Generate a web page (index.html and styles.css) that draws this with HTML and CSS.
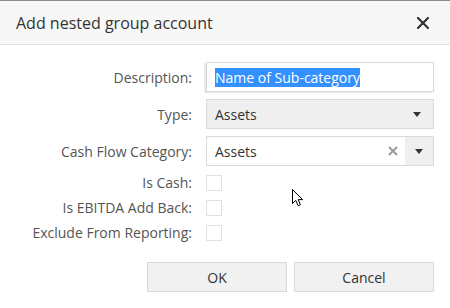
FILE: index.html
```html
<!DOCTYPE html>
<html>
<head>
<meta charset="utf-8">
<link rel="stylesheet" href="styles.css">
</head>
<body>
<div class="dialog">
  <div class="header">
    <span class="title">Add nested group account</span>
    <svg class="close" width="12" height="12" viewBox="0 0 12 12"><path d="M1 1L11 11M11 1L1 11" stroke="#333" stroke-width="2.2" stroke-linecap="square"/></svg>
  </div>
  <div class="form">
    <div class="row">
      <label class="label">Description:</label>
      <div class="input focused"><span class="sel">Name of Sub-category</span></div>
    </div>
    <div class="row">
      <label class="label">Type:</label>
      <div class="input select"><span class="val">Assets</span><span class="arrow"></span></div>
    </div>
    <div class="row">
      <label class="label">Cash Flow Category:</label>
      <div class="input combo"><span class="val">Assets</span>
        <svg class="clear" width="10" height="10" viewBox="0 0 10 10"><path d="M1 1L9 9M9 1L1 9" stroke="#9a9a9a" stroke-width="1.8"/></svg>
        <span class="dd"><span class="arrow"></span></span>
      </div>
    </div>
    <div class="row check">
      <label class="label">Is Cash:</label>
      <span class="box"></span>
    </div>
    <div class="row check">
      <label class="label">Is EBITDA Add Back:</label>
      <span class="box"></span>
    </div>
    <div class="row check">
      <label class="label">Exclude From Reporting:</label>
      <span class="box"></span>
    </div>
  </div>
  <div class="buttons">
    <button class="btn">OK</button>
    <button class="btn">Cancel</button>
  </div>
  <svg class="cursor" width="13" height="19" viewBox="0 0 13 19"><path d="M0.5 0.5L0.5 14.5L3.8 11.4L6.1 16.8L8.4 15.8L6.2 10.6L10.6 10.6Z" fill="#fff" stroke="#000" stroke-width="1" stroke-linejoin="miter"/></svg>
</div>
</body>
</html>
```
FILE: styles.css
```css
html, body {
  margin: 0;
  padding: 0;
  background: #fff;
}
body {
  font-family: "Open Sans", "Noto Sans", sans-serif;
  font-size: 14px;
  color: #333;
}
.dialog {
  position: relative;
  width: 450px;
  height: 307px;
  border-top: 1px solid #8c8c8c;
}
.header {
  height: 43px;
  background: #f7f7f7;
  border-bottom: 1px solid #e2e2e2;
  display: flex;
  align-items: center;
  justify-content: space-between;
  padding: 0 21px 0 16px;
}
.title {
  font-size: 16px;
  color: #333;
}
.close {
  display: block;
  margin-top: 1px;
}
.form {
  padding-top: 17px;
  display: flex;
  flex-direction: column;
  gap: 7px;
}
.row {
  display: grid;
  grid-template-columns: 192px 228px;
  column-gap: 14px;
  align-items: center;
}
.row.check {
  height: 16px;
  margin-top: 2px;
}
.row.check .label {
  line-height: 16px;
}
.label {
  text-align: right;
  color: #555;
}
.input {
  box-sizing: border-box;
  height: 30px;
  border: 1px solid #dadada;
  background: #fff;
  display: flex;
  align-items: center;
  padding-left: 8px;
  color: #333;
}
.input.focused {
  box-shadow: -2px 1px 0 #e9e9e9;
}
.sel {
  background: #3390ff;
  color: #fff;
  line-height: 19px;
}
.select {
  background: #efefef;
  justify-content: space-between;
  padding-right: 12px;
}
.arrow {
  width: 0;
  height: 0;
  border-left: 4px solid transparent;
  border-right: 4px solid transparent;
  border-top: 5px solid #333;
}
.combo {
  padding-right: 0;
}
.combo .val {
  flex: 1;
}
.clear {
  display: block;
  margin-right: 7px;
}
.dd {
  width: 28px;
  height: 28px;
  background: #efefef;
  display: flex;
  align-items: center;
  justify-content: center;
}
.box {
  box-sizing: border-box;
  width: 16px;
  height: 16px;
  border: 1px solid #e0e0e0;
  background: #fff;
}
.buttons {
  display: flex;
  justify-content: flex-end;
  gap: 7px;
  padding: 21px 16px 0 0;
}
.btn {
  box-sizing: border-box;
  width: 140px;
  height: 30px;
  background: #f1f1f1;
  border: 1px solid #d9d9d9;
  font-family: "Open Sans", "Noto Sans", sans-serif;
  font-size: 14px;
  color: #333;
  padding: 0;
}
.cursor {
  position: absolute;
  left: 292px;
  top: 188px;
}
```
